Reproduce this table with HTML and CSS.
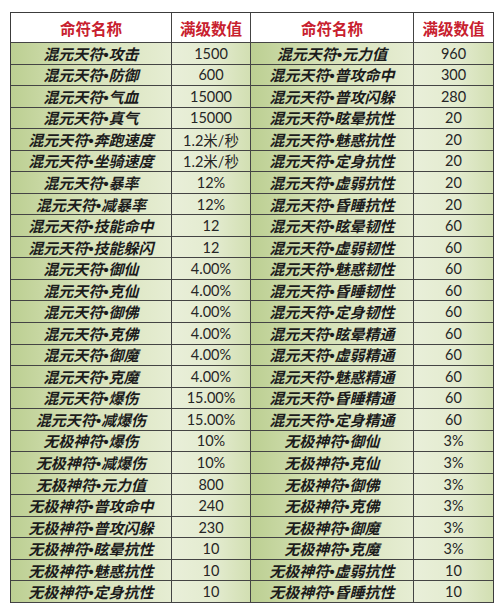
FILE: index.html
```html
<!DOCTYPE html>
<html lang="zh-CN">
<head>
<meta charset="utf-8">
<title>命符满级数值</title>
<link rel="stylesheet" href="styles.css">
</head>
<body>
<div class="sheet">
  <div class="hd">命符名称</div><div class="hd">满级数值</div><div class="hd">命符名称</div><div class="hd">满级数值</div>

  <div class="nm">混元天符•攻击</div><div class="vl">1500</div><div class="nm">混元天符•元力值</div><div class="vl">960</div>
  <div class="nm">混元天符•防御</div><div class="vl">600</div><div class="nm">混元天符•普攻命中</div><div class="vl">300</div>
  <div class="nm">混元天符•气血</div><div class="vl">15000</div><div class="nm">混元天符•普攻闪躲</div><div class="vl">280</div>
  <div class="nm">混元天符•真气</div><div class="vl">15000</div><div class="nm">混元天符•眩晕抗性</div><div class="vl">20</div>
  <div class="nm">混元天符•奔跑速度</div><div class="vl">1.2米/秒</div><div class="nm">混元天符•魅惑抗性</div><div class="vl">20</div>
  <div class="nm">混元天符•坐骑速度</div><div class="vl">1.2米/秒</div><div class="nm">混元天符•定身抗性</div><div class="vl">20</div>
  <div class="nm">混元天符•暴率</div><div class="vl">12%</div><div class="nm">混元天符•虚弱抗性</div><div class="vl">20</div>
  <div class="nm">混元天符•减暴率</div><div class="vl">12%</div><div class="nm">混元天符•昏睡抗性</div><div class="vl">20</div>
  <div class="nm">混元天符•技能命中</div><div class="vl">12</div><div class="nm">混元天符•眩晕韧性</div><div class="vl">60</div>
  <div class="nm">混元天符•技能躲闪</div><div class="vl">12</div><div class="nm">混元天符•虚弱韧性</div><div class="vl">60</div>
  <div class="nm">混元天符•御仙</div><div class="vl">4.00%</div><div class="nm">混元天符•魅惑韧性</div><div class="vl">60</div>
  <div class="nm">混元天符•克仙</div><div class="vl">4.00%</div><div class="nm">混元天符•昏睡韧性</div><div class="vl">60</div>
  <div class="nm">混元天符•御佛</div><div class="vl">4.00%</div><div class="nm">混元天符•定身韧性</div><div class="vl">60</div>
  <div class="nm">混元天符•克佛</div><div class="vl">4.00%</div><div class="nm">混元天符•眩晕精通</div><div class="vl">60</div>
  <div class="nm">混元天符•御魔</div><div class="vl">4.00%</div><div class="nm">混元天符•虚弱精通</div><div class="vl">60</div>
  <div class="nm">混元天符•克魔</div><div class="vl">4.00%</div><div class="nm">混元天符•魅惑精通</div><div class="vl">60</div>
  <div class="nm">混元天符•爆伤</div><div class="vl">15.00%</div><div class="nm">混元天符•昏睡精通</div><div class="vl">60</div>
  <div class="nm">混元天符•减爆伤</div><div class="vl">15.00%</div><div class="nm">混元天符•定身精通</div><div class="vl">60</div>
  <div class="nm">无极神符•爆伤</div><div class="vl">10%</div><div class="nm">无极神符•御仙</div><div class="vl">3%</div>
  <div class="nm">无极神符•减爆伤</div><div class="vl">10%</div><div class="nm">无极神符•克仙</div><div class="vl">3%</div>
  <div class="nm">无极神符•元力值</div><div class="vl">800</div><div class="nm">无极神符•御佛</div><div class="vl">3%</div>
  <div class="nm">无极神符•普攻命中</div><div class="vl">240</div><div class="nm">无极神符•克佛</div><div class="vl">3%</div>
  <div class="nm">无极神符•普攻闪躲</div><div class="vl">230</div><div class="nm">无极神符•御魔</div><div class="vl">3%</div>
  <div class="nm">无极神符•眩晕抗性</div><div class="vl">10</div><div class="nm">无极神符•克魔</div><div class="vl">3%</div>
  <div class="nm">无极神符•魅惑抗性</div><div class="vl">10</div><div class="nm">无极神符•虚弱抗性</div><div class="vl">10</div>
  <div class="nm">无极神符•定身抗性</div><div class="vl">10</div><div class="nm">无极神符•昏睡抗性</div><div class="vl">10</div>
</div>
</body>
</html>
```

FILE: styles.css
```css
html, body {
  margin: 0;
  padding: 0;
  background: #ffffff;
}

.sheet {
  margin: 12px 0 0 10px;
  width: 482px;
  height: 590px;
  border: 1px solid #3c3c3c;
  border-bottom: none;
  display: grid;
  grid-template-columns: 161px 79px 163px 79px;
  grid-template-rows: 30px repeat(26, 1fr);
}

.sheet > div {
  display: flex;
  align-items: center;
  justify-content: center;
  border-bottom: 1px solid #444;
  border-right: 1px solid #444;
  white-space: nowrap;
  overflow: hidden;
}

.sheet > div:nth-child(4n) {
  border-right: none;
}

.hd {
  background: #ffffff;
  color: #c8202e;
  font-family: "Noto Sans CJK SC", sans-serif;
  font-weight: 700;
  font-size: 15.5px;
}

.nm {
  background: linear-gradient(90deg, #bccf92 0%, #d4e0b4 40%, #e6edd3 100%);
  color: #1c1c1c;
  font-family: "Liberation Sans", "Noto Sans CJK SC", sans-serif;
  font-weight: 700;
  font-style: italic;
  font-size: 15px;
}

.vl {
  background: linear-gradient(90deg, #e9efd9 0%, #e3ebcf 55%, #d2dfb2 100%);
  color: #262626;
  font-family: Lato, "Noto Sans CJK SC", sans-serif;
  font-size: 14.5px;
}
```
